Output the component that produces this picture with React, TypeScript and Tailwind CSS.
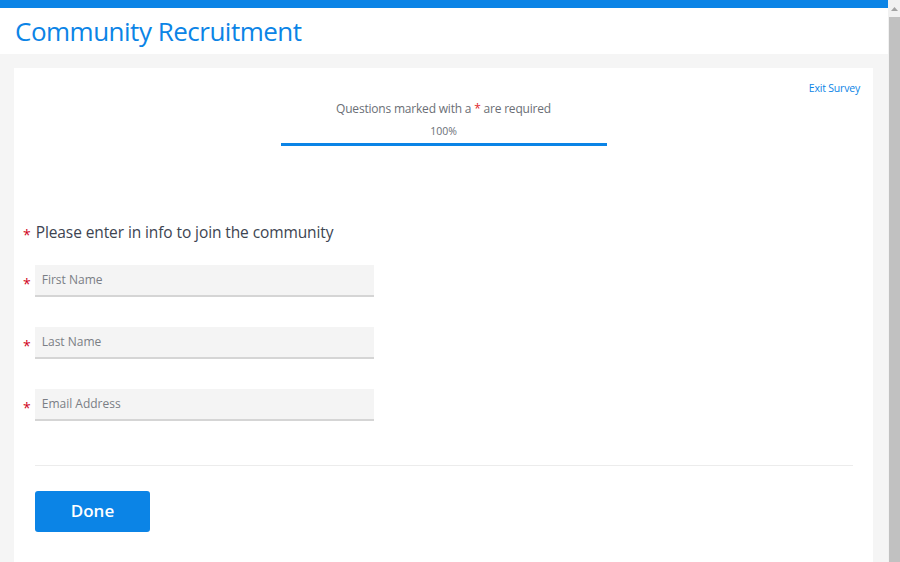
export default function App() {
  const fields = ["First Name", "Last Name", "Email Address"];
  return (
    <div className="flex h-[562px] w-[900px] overflow-hidden bg-[#f5f5f5] font-['Open_Sans',sans-serif]">
      <div className="flex flex-1 flex-col">
        {/* header */}
        <div className="h-[8px] bg-[#0b84e6]" />
        <header className="flex h-[46px] items-center bg-white px-[15px]">
          <h1 className="text-[26px] leading-none text-[#0b84e6] tracking-[-0.5px]">Community Recruitment</h1>
        </header>

        {/* card */}
        <main className="mx-[14px] mr-[15px] mt-[14px] flex-1 bg-white">
          <div className="flex justify-end px-[13px] pt-[15px]">
            <a className="text-[10.5px] leading-none text-[#0b84e6] tracking-[-0.2px]">Exit Survey</a>
          </div>
          <div className="flex flex-col items-center">
            <p className="mt-[6px] text-[12px] tracking-[-0.2px] text-[#6b6f76]">
              Questions marked with a <span className="text-[#e0282e]">*</span> are required
            </p>
            <p className="mt-[6px] text-[10.5px] text-[#6b6f76]">100%</p>
            <div className="mt-[4px] h-[3px] w-[326px] bg-[#0b84e6]" />
          </div>

          <div className="mt-[75px] flex items-center gap-[5px] pl-[9px]">
            <span className="mt-[4px] text-[14px] leading-none text-[#d0021b]">*</span>
            <h2 className="text-[15.5px] tracking-[-0.1px] text-[#3d4451]">Please enter in info to join the community</h2>
          </div>

          <div className="mt-[20px] flex flex-col gap-[30px]">
            {fields.map((f) => (
              <div key={f} className="flex items-center gap-[4px] pl-[9px]">
                <span className="mt-[6px] text-[14px] leading-none text-[#d0021b]">*</span>
                <div className="flex h-[32px] w-[339px] items-center border-b-2 border-[#d5d5d5] bg-[#f4f4f4] px-[7px]">
                  <span className="text-[12px] text-[#7a7e85]">{f}</span>
                </div>
              </div>
            ))}
          </div>

          <div className="ml-[21px] mr-[20px] mt-[44px] h-px bg-[#ececec]" />

          <div className="ml-[21px] mt-[25px]">
            <button className="h-[41px] w-[115px] rounded-[3px] bg-[#0b84e6] text-[17px] font-semibold text-white">
              Done
            </button>
          </div>
        </main>
      </div>

      {/* scrollbar */}
      <div className="flex w-[12px] flex-col bg-[#f1f1f1]">
        <div className="flex h-[17px] items-center justify-center">
          <svg width="7" height="4" viewBox="0 0 7 4">
            <path d="M0 4 L3.5 0 L7 4 Z" fill="#a3a3a3" />
          </svg>
        </div>
        <div className="ml-px flex-1 bg-[#c1c1c1]" />
      </div>
    </div>
  );
}
